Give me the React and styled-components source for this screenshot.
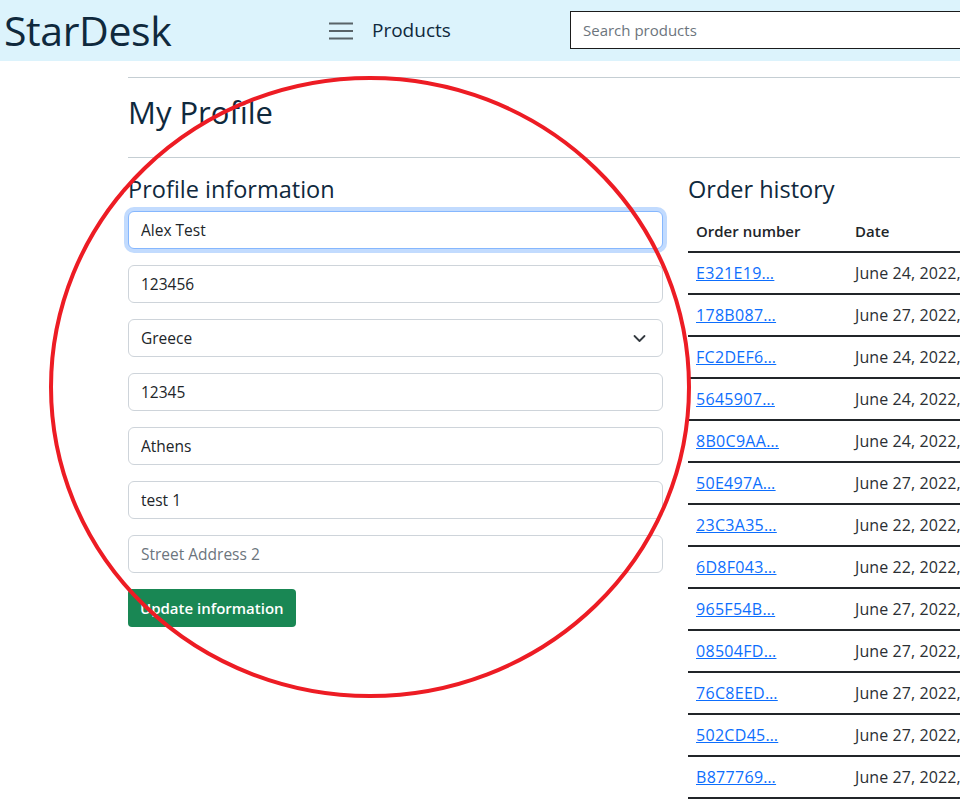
import React from "react";
import styled, { createGlobalStyle } from "styled-components";

const GlobalStyle = createGlobalStyle`
  body {
    margin: 0;
    overflow: hidden;
    background: #fff;
    font-family: "Open Sans", "Noto Sans", sans-serif;
    color: #212529;
    font-size: 16px;
    line-height: 1.5;
  }
  * { box-sizing: border-box; }
`;

const Page = styled.div`
  width: 1372px;
  position: relative;
`;

const NavBar = styled.nav`
  display: flex;
  align-items: center;
  height: 61px;
  background: #dcf3fc;
  padding-left: 4px;
`;

const Brand = styled.a`
  font-size: 41px;
  line-height: 1;
  color: #0f293d;
  text-decoration: none;
  letter-spacing: -0.4px;
  width: 325px;
`;

const Toggler = styled.button`
  display: flex;
  align-items: center;
  border: none;
  background: none;
  padding: 0;
  width: 24px;
  height: 24px;
  margin-right: 19px;
  color: rgba(33, 37, 41, 0.7);
`;

const NavLink = styled.a`
  font-size: 19px;
  color: #0f293d;
  text-decoration: none;
  width: 198px;
`;

const Search = styled.input`
  height: 38px;
  width: 700px;
  margin-bottom: 1px;
  border: 1px solid #1b1b1b;
  border-radius: 0;
  padding: 6px 12px;
  font-family: inherit;
  font-size: 15px;
  &::placeholder { color: #6c757d; }
`;

const Container = styled.main`
  margin-left: 128px;
  width: 1116px;
`;

const Rule = styled.hr`
  border: none;
  border-top: 1px solid #c5ced3;
  margin: 16px 0;
`;

const Title = styled.h2`
  font-size: 31px;
  font-weight: 400;
  line-height: 1.2;
  color: #0f293d;
  margin: 0 0 26px;
`;

const Columns = styled.div`
  display: grid;
  grid-template-columns: 535px 1fr;
  column-gap: 25px;
  padding-top: 1px;
`;

const SubTitle = styled.h4`
  font-size: 23.5px;
  font-weight: 400;
  line-height: 1.2;
  color: #0f293d;
  margin: 0 0 8px;
`;

const Form = styled.form`
  display: flex;
  flex-direction: column;
  gap: 16px;
`;

const Field = styled.input`
  height: 38px;
  width: 100%;
  padding: 6px 12px;
  font-family: inherit;
  font-size: 15.5px;
  color: #212529;
  border: 1px solid ${(p) => (p.focused ? "#86b7fe" : "#ced4da")};
  border-radius: 6px;
  box-shadow: ${(p) => (p.focused ? "0 0 0 4px rgba(13,110,253,0.25)" : "none")};
  outline: none;
  &::placeholder { color: #6c757d; }
`;

const SelectBox = styled.div`
  display: flex;
  align-items: center;
  justify-content: space-between;
  height: 38px;
  padding: 6px 16px 6px 12px;
  font-size: 15.5px;
  border: 1px solid #ced4da;
  border-radius: 6px;
`;

const SubmitButton = styled.button`
  align-self: flex-start;
  height: 38px;
  padding: 0 12px;
  background: #198754;
  color: #fff;
  border: none;
  border-radius: 4px;
  font-family: inherit;
  font-size: 15px;
  font-weight: 600;
`;

const Table = styled.table`
  border-collapse: collapse;
  width: 700px;
  font-size: 16px;
`;

const Th = styled.th`
  text-align: left;
  font-weight: 600;
  font-size: 15px;
  padding: 8px;
  line-height: 24px;
  border-bottom: 2px solid #212529;
  width: ${(p) => p.w || "auto"};
  white-space: nowrap;
`;

const Td = styled.td`
  padding: 8px;
  line-height: 24px;
  border-bottom: 2px solid #212529;
  white-space: nowrap;
  color: #2b2f33;
  letter-spacing: 0.1px;
`;

const OrderLink = styled.a`
  color: #0d6efd;
  text-decoration: underline;
  letter-spacing: 0.3px;
`;

const Marker = styled.svg`
  position: absolute;
  left: 0;
  top: 0;
  pointer-events: none;
`;

const orders = [
  ["E321E19…", "June 24, 2022, 10:14 a.m.", "Paid"],
  ["178B087…", "June 27, 2022, 9:02 a.m.", "Paid"],
  ["FC2DEF6…", "June 24, 2022, 11:40 a.m.", "Paid"],
  ["5645907…", "June 24, 2022, 11:52 a.m.", "Paid"],
  ["8B0C9AA…", "June 24, 2022, 12:03 p.m.", "Paid"],
  ["50E497A…", "June 27, 2022, 9:15 a.m.", "Paid"],
  ["23C3A35…", "June 22, 2022, 4:21 p.m.", "Paid"],
  ["6D8F043…", "June 22, 2022, 4:48 p.m.", "Paid"],
  ["965F54B…", "June 27, 2022, 9:31 a.m.", "Paid"],
  ["08504FD…", "June 27, 2022, 9:44 a.m.", "Paid"],
  ["76C8EED…", "June 27, 2022, 10:05 a.m.", "Paid"],
  ["502CD45…", "June 27, 2022, 10:22 a.m.", "Paid"],
  ["B877769…", "June 27, 2022, 10:37 a.m.", "Paid"],
  ["3A1F0C2…", "June 27, 2022, 10:51 a.m.", "Paid"],
];

export default function App() {
  return (
    <Page>
      <GlobalStyle />
      <NavBar>
        <Brand href="#">StarDesk</Brand>
        <Toggler aria-label="menu">
          <svg width="24" height="24" viewBox="0 0 24 24">
            <path d="M0 4.5h24M0 12h24M0 19.5h24" stroke="currentColor" strokeWidth="2" />
          </svg>
        </Toggler>
        <NavLink href="#">Products</NavLink>
        <Search placeholder="Search products" />
      </NavBar>

      <Container>
        <Rule />
        <Title>My Profile</Title>
        <Rule />
        <Columns>
          <section>
            <SubTitle>Profile information</SubTitle>
            <Form onSubmit={(e) => e.preventDefault()}>
              <Field focused defaultValue="Alex Test" />
              <Field defaultValue="123456" />
              <SelectBox>
                <span>Greece</span>
                <svg width="13" height="9" viewBox="0 0 13 9">
                  <path d="M1.5 2l5 5 5-5" fill="none" stroke="#343a40" strokeWidth="1.8" strokeLinecap="round" strokeLinejoin="round" />
                </svg>
              </SelectBox>
              <Field defaultValue="12345" />
              <Field defaultValue="Athens" />
              <Field defaultValue="test 1" />
              <Field placeholder="Street Address 2" />
              <SubmitButton>Update information</SubmitButton>
            </Form>
          </section>
          <section>
            <SubTitle>Order history</SubTitle>
            <Table>
              <thead>
                <tr>
                  <Th w="159px">Order number</Th>
                  <Th w="250px">Date</Th>
                  <Th>Status</Th>
                </tr>
              </thead>
              <tbody>
                {orders.map(([id, date, status]) => (
                  <tr key={id}>
                    <Td><OrderLink href="#">{id}</OrderLink></Td>
                    <Td>{date}</Td>
                    <Td>{status}</Td>
                  </tr>
                ))}
              </tbody>
            </Table>
          </section>
        </Columns>
      </Container>

      <Marker width="960" height="801">
        <ellipse cx="370" cy="387" rx="319" ry="309" fill="none" stroke="#ed1c24" strokeWidth="4" />
      </Marker>
    </Page>
  );
}
